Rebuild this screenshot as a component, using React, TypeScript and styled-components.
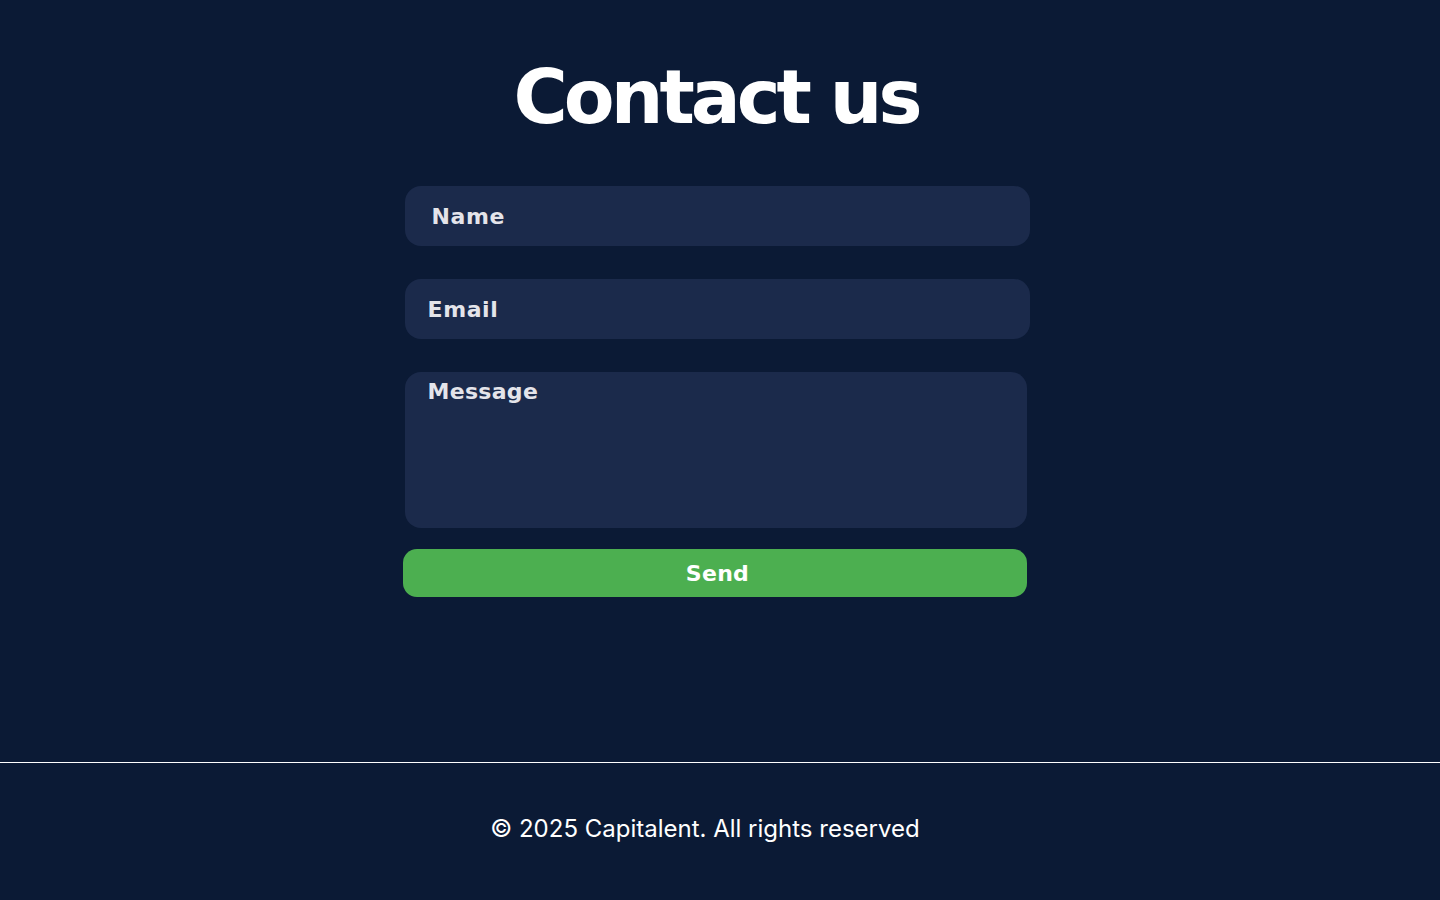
import React from "react";
import styled, { createGlobalStyle } from "styled-components";

const Global = createGlobalStyle`
  html, body { margin: 0; padding: 0; background: #0b1a35; }
  * { box-sizing: border-box; }
`;

const Page = styled.div`
  min-height: 900px;
  display: flex;
  flex-direction: column;
  background: #0b1a35;
`;

const Main = styled.main`
  height: 762px;
  display: flex;
  flex-direction: column;
  align-items: center;
  padding-top: 52px;
`;

const Title = styled.h1`
  margin: 0;
  font-family: "DejaVu Sans", sans-serif;
  font-weight: 700;
  font-size: 74px;
  line-height: 90px;
  letter-spacing: -4px;
  color: #ffffff;
  transform: translateX(-4px);
`;

const Form = styled.form`
  margin-top: 44px;
  width: 627px;
  display: flex;
  flex-direction: column;
  transform: translateX(-4px);
`;

const Field = styled.input<{ $pad: number }>`
  height: 60px;
  width: 625px;
  margin-left: 2px;
  border: none;
  outline: none;
  border-radius: 16px;
  background: #1b2a4b;
  padding: 0 0 0 ${(p) => p.$pad}px;
  font-family: "DejaVu Sans", sans-serif;
  font-weight: 700;
  font-size: 22px;
  letter-spacing: 0.6px;
  color: #e4e4ea;
  margin-bottom: 33px;
  &::placeholder { color: #e4e4ea; opacity: 1; }
`;

const Area = styled.textarea`
  height: 156px;
  width: 622px;
  margin-left: 2px;
  border: none;
  outline: none;
  resize: none;
  border-radius: 16px;
  background: #1b2a4b;
  padding: 7px 0 0 23px;
  font-family: "DejaVu Sans", sans-serif;
  font-weight: 700;
  font-size: 22px;
  line-height: 26px;
  letter-spacing: 0.3px;
  color: #e4e4ea;
  &::placeholder { color: #e4e4ea; opacity: 1; }
`;

const Send = styled.button`
  margin-top: 21px;
  height: 48px;
  width: 624px;
  border: none;
  border-radius: 14px;
  background: #4caf50;
  color: #ffffff;
  font-family: "DejaVu Sans", sans-serif;
  font-weight: 700;
  font-size: 22px;
  letter-spacing: 0.3px;
  cursor: pointer;
  padding: 0 0 0 6px;
`;

const Footer = styled.footer`
  height: 138px;
  border-top: 1px solid #ffffff;
  display: flex;
  align-items: center;
  justify-content: center;
  padding-bottom: 6px;
`;

const FooterText = styled.p`
  margin: 0;
  font-family: Inter, sans-serif;
  font-size: 24px;
  color: #ffffff;
  transform: translateX(-15px);
`;

export default function App() {
  return (
    <Page>
      <Global />
      <Main>
        <Title>Contact us</Title>
        <Form onSubmit={(e) => e.preventDefault()}>
          <Field $pad={27} type="text" placeholder="Name" />
          <Field $pad={23} type="email" placeholder="Email" />
          <Area placeholder="Message" />
          <Send type="submit">Send</Send>
        </Form>
      </Main>
      <Footer>
        <FooterText>© 2025 Capitalent. All rights reserved</FooterText>
      </Footer>
    </Page>
  );
}
